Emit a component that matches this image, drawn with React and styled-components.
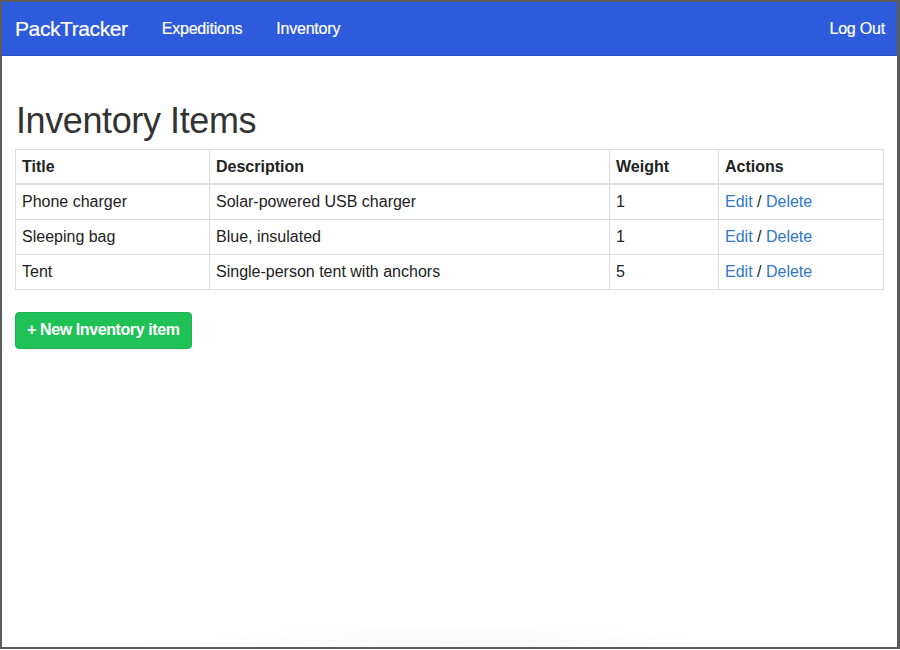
import React from 'react'
import styled, { createGlobalStyle } from 'styled-components'

const GlobalStyle = createGlobalStyle`
  html, body {
    margin: 0;
    padding: 0;
    background: #ffffff;
  }
  body {
    font-family: "Liberation Sans", Arial, sans-serif;
    color: #222;
  }
`

const Frame = styled.div`
  box-sizing: border-box;
  width: 900px;
  height: 649px;
  border: 2px solid #5c5c5c;
  border-right-width: 3px;
  position: relative;
  overflow: hidden;
  background: #fff;
`

const Navbar = styled.nav`
  height: 53px;
  background-color: #2d5bdc;
  border-bottom: 1px solid #2a50c4;
  display: flex;
  align-items: center;
  padding: 0 12px 0 13px;
`

const Brand = styled.a`
  color: #fff;
  font-size: 21px;
  text-decoration: none;
  margin-right: 34px;
  letter-spacing: -0.4px;
  -webkit-text-stroke: 0.2px #fff;
`

const NavLink = styled.a`
  color: #fff;
  font-size: 16px;
  text-decoration: none;
  margin-right: ${(p) => (p.$right ? '0' : '34px')};
  margin-left: ${(p) => (p.$right ? 'auto' : '0')};
  letter-spacing: -0.2px;
  -webkit-text-stroke: 0.2px #fff;
`

const Main = styled.main`
  padding: 0 13px;
`

const Heading = styled.h1`
  font-size: 36px;
  font-weight: 400;
  color: #333;
  margin: 45px 0 8px 1px;
  line-height: 1.1;
  letter-spacing: -0.4px;
`

const Table = styled.table`
  width: 100%;
  table-layout: fixed;
  border-collapse: collapse;
  border: 1px solid #ddd;
  font-size: 16px;
  color: #222;
`

const Th = styled.th`
  box-sizing: border-box;
  text-align: left;
  font-weight: 700;
  padding: 8px 6px 7px;
  border: 1px solid #ddd;
  border-bottom: 2px solid #ddd;
  width: ${(p) => p.$w || 'auto'};
`

const Td = styled.td`
  padding: 8px 6px 8px;
  border: 1px solid #ddd;
  line-height: 18px;
`

const Link = styled.a`
  color: #2f78c7;
  text-decoration: none;
`

const AddButton = styled.button`
  margin-top: 22px;
  background: #20c157;
  color: #fff;
  border: 1px solid #1db350;
  border-radius: 4px;
  font-family: "Liberation Sans", Arial, sans-serif;
  font-size: 16px;
  font-weight: 700;
  height: 37px;
  padding: 0 11px;
  letter-spacing: -0.4px;
  cursor: pointer;
`

const BottomShade = styled.div`
  position: absolute;
  left: 100px;
  right: 100px;
  bottom: -30px;
  height: 60px;
  border-radius: 50%;
  background: radial-gradient(ellipse at center, rgba(0,0,0,0.025), rgba(0,0,0,0) 70%);
`

const items = [
  { title: 'Phone charger', description: 'Solar-powered USB charger', weight: 1 },
  { title: 'Sleeping bag', description: 'Blue, insulated', weight: 1 },
  { title: 'Tent', description: 'Single-person tent with anchors', weight: 5 },
]

const App = () => {
  return (
    <>
      <GlobalStyle />
      <Frame>
        <Navbar>
          <Brand href="#">PackTracker</Brand>
          <NavLink href="#">Expeditions</NavLink>
          <NavLink href="#">Inventory</NavLink>
          <NavLink href="#" $right>Log Out</NavLink>
        </Navbar>
        <Main>
          <Heading>Inventory Items</Heading>
          <Table>
            <thead>
              <tr>
                <Th $w="194px">Title</Th>
                <Th $w="400px">Description</Th>
                <Th $w="109px">Weight</Th>
                <Th>Actions</Th>
              </tr>
            </thead>
            <tbody>
              {items.map((item) => (
                <tr key={item.title}>
                  <Td>{item.title}</Td>
                  <Td>{item.description}</Td>
                  <Td>{item.weight}</Td>
                  <Td>
                    <Link href="#">Edit</Link> / <Link href="#">Delete</Link>
                  </Td>
                </tr>
              ))}
            </tbody>
          </Table>
          <AddButton>+ New Inventory item</AddButton>
        </Main>
        <BottomShade />
      </Frame>
    </>
  )
}

export default App
